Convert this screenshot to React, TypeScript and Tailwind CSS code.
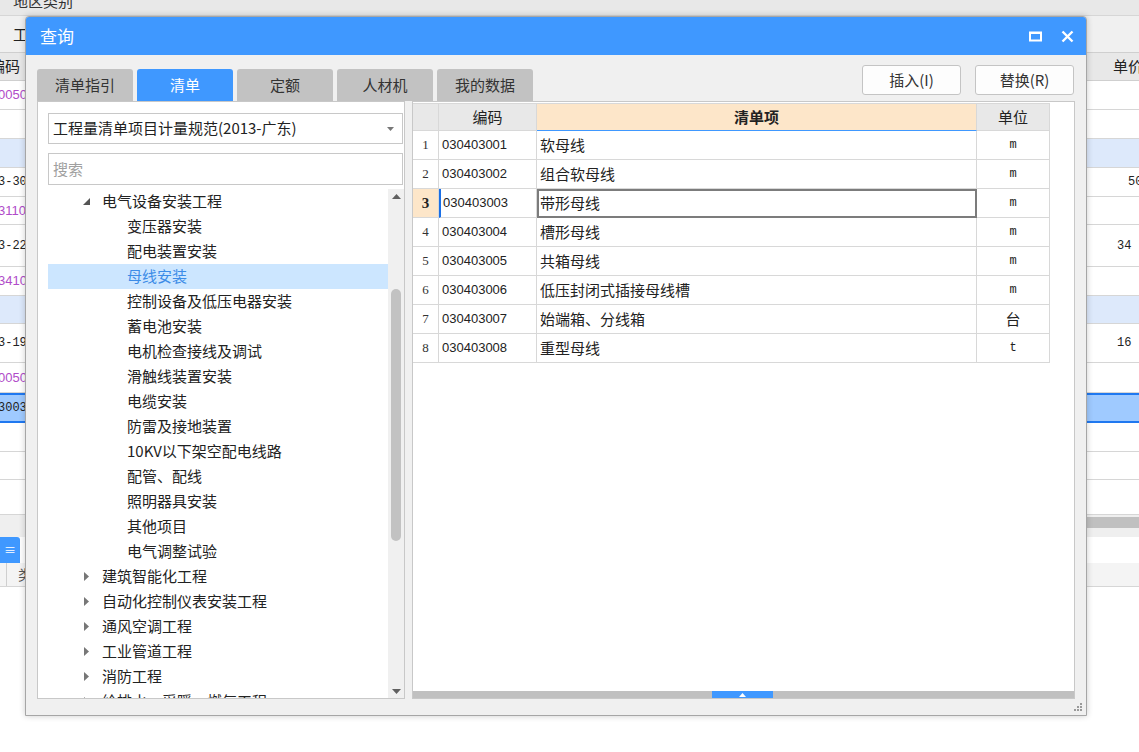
import React from 'react'

const cjk = "font-['Noto_Sans_CJK_SC','Liberation_Sans',sans-serif]"
const purple = "text-[#b04cc9] font-['Liberation_Sans',sans-serif] text-[13px]"

type BgRow = {
  h: string
  bg: string
  left?: string
  leftClass?: string
  right?: string
  rightPad?: string
  selected?: boolean
}

const bgRows: BgRow[] = [
  { h: 'h-[29px]', bg: 'bg-white', left: '0050', leftClass: purple },
  { h: 'h-[29px]', bg: 'bg-white' },
  { h: 'h-[29px]', bg: 'bg-[#dde9fb]' },
  { h: 'h-[29px]', bg: 'bg-white', left: '3-30', right: '50', rightPad: 'pl-[41px]' },
  { h: 'h-[28px]', bg: 'bg-white', left: '3110', leftClass: purple },
  { h: 'h-[42px]', bg: 'bg-white', left: '3-22', right: '34', rightPad: 'pl-[30px]' },
  { h: 'h-[29px]', bg: 'bg-white', left: '3410', leftClass: purple },
  { h: 'h-[28px]', bg: 'bg-[#dde9fb]' },
  { h: 'h-[39px]', bg: 'bg-white', left: '3-19', right: '16', rightPad: 'pl-[30px]' },
  { h: 'h-[30px]', bg: 'bg-white', left: '0050', leftClass: purple },
  { h: 'h-[30px]', bg: 'bg-[#9fcaff]', left: '3003', selected: true },
  { h: 'h-[29px]', bg: 'bg-white' },
  { h: 'h-[28px]', bg: 'bg-white' },
  { h: 'h-[35px]', bg: 'bg-white' },
]

const treeChildren = [
  '变压器安装',
  '配电装置安装',
  '母线安装',
  '控制设备及低压电器安装',
  '蓄电池安装',
  '电机检查接线及调试',
  '滑触线装置安装',
  '电缆安装',
  '防雷及接地装置',
  '10KV以下架空配电线路',
  '配管、配线',
  '照明器具安装',
  '其他项目',
  '电气调整试验',
]

const treeCollapsed = [
  '建筑智能化工程',
  '自动化控制仪表安装工程',
  '通风空调工程',
  '工业管道工程',
  '消防工程',
  '给排水、采暖、燃气工程',
]

const items = [
  { code: '030403001', name: '软母线', unit: 'm' },
  { code: '030403002', name: '组合软母线', unit: 'm' },
  { code: '030403003', name: '带形母线', unit: 'm' },
  { code: '030403004', name: '槽形母线', unit: 'm' },
  { code: '030403005', name: '共箱母线', unit: 'm' },
  { code: '030403006', name: '低压封闭式插接母线槽', unit: 'm' },
  { code: '030403007', name: '始端箱、分线箱', unit: '台' },
  { code: '030403008', name: '重型母线', unit: 't' },
]

const tabs = ['清单指引', '清单', '定额', '人材机', '我的数据']

const Background = () => (
  <div className={`flex flex-col w-[1139px] h-[752px] bg-white overflow-hidden ${cjk}`}>
    <div className="h-[16px] bg-[#e8e8e8] border-b border-[#d6d6d6] overflow-hidden pl-[13px]">
      <div className="-mt-[10px] text-[15px] text-[#333]">地区类别</div>
    </div>
    <div className="h-[36px] bg-[#f0f0f0] flex items-center pl-[13px] text-[15px] text-[#222]">
      工
    </div>
    <div className="h-[29px] flex bg-[#e8e8e8] border-y border-[#cfcfcf] text-[15px] text-[#222]">
      <div className="w-[25px] overflow-hidden flex items-center">
        <span className="-ml-[10px] whitespace-nowrap">编码</span>
      </div>
      <div className="flex-1" />
      <div className="w-[52px] flex items-center pl-[26px] whitespace-nowrap overflow-hidden">单价</div>
    </div>
    {bgRows.map((r, i) => (
      <div
        key={i}
        className={`flex shrink-0 ${r.h} ${r.bg} ${
          r.selected ? 'border-y-2 border-[#1f78f0]' : 'border-b border-[#d6d6d6]'
        }`}
      >
        <div
          className={`w-[25px] overflow-hidden flex items-center whitespace-nowrap ${
            r.leftClass ?? "text-[#222] font-['Liberation_Mono',monospace] text-[12px]"
          }`}
        >
          <span className="-ml-[2px]">{r.left}</span>
        </div>
        <div className="flex-1" />
        <div
          className={`w-[52px] overflow-hidden flex items-center whitespace-nowrap font-['Liberation_Mono',monospace] text-[12px] text-[#222] ${
            r.rightPad ?? ''
          }`}
        >
          {r.right}
        </div>
      </div>
    ))}
    <div className="h-[22px] shrink-0 flex bg-[#efefef]">
      <div className="w-[25px]" />
      <div className="flex-1" />
      <div className="w-[52px] pt-[2px]">
        <div className="h-[11px] bg-[#c0c0c0]" />
      </div>
    </div>
    <div className="h-[26px] shrink-0 flex">
      <div className="w-[20px] bg-[#3f98ff] rounded-tr-[3px] flex items-center justify-center text-white text-[12px]">
        ≡
      </div>
      <div className="flex-1" />
    </div>
    <div className="h-[24px] shrink-0 flex border-b border-[#d6d6d6] bg-[#f4f4f4]">
      <div className="w-[7px] border-r border-[#cfcfcf]" />
      <div className="w-[18px] overflow-hidden flex items-center pl-[11px] text-[14px] text-[#555]">类</div>
      <div className="flex-1" />
    </div>
  </div>
)

const TitleBar = () => (
  <div className="h-[38px] bg-[#3f98ff] rounded-t-[3px] flex items-center justify-between pl-[14px] pr-[12px]">
    <span className="text-white text-[17px]">查询</span>
    <div className="flex items-center gap-[19px]">
      <svg width="13" height="11" viewBox="0 0 13 11">
        <rect x="1" y="1.5" width="11" height="8" fill="none" stroke="white" strokeWidth="2" />
        <rect x="1" y="1" width="11" height="2" fill="white" />
      </svg>
      <svg width="13" height="13" viewBox="0 0 13 13">
        <path d="M1.5 1.5 L11.5 11.5 M11.5 1.5 L1.5 11.5" stroke="white" strokeWidth="2.4" />
      </svg>
    </div>
  </div>
)

const TopSection = () => (
  <div className="h-[46px] flex justify-between pl-[11px] pr-[12px]">
    <div className="flex items-end gap-[4px]">
      {tabs.map((t, i) => (
        <div
          key={t}
          className={`w-[96px] h-[32px] rounded-t-[3px] flex items-center justify-center text-[15px] ${
            i === 1 ? 'bg-[#3f98ff] text-white' : 'bg-[#c2c2c2] text-[#333]'
          }`}
        >
          {t}
        </div>
      ))}
    </div>
    <div className="flex gap-[14px] pt-[10px]">
      <button className="w-[99px] h-[30px] bg-[#fdfdfd] border border-[#c4c4c4] rounded-[3px] text-[15px] text-[#333]">
        插入(I)
      </button>
      <button className="w-[99px] h-[30px] bg-[#fdfdfd] border border-[#c4c4c4] rounded-[3px] text-[15px] text-[#333]">
        替换(R)
      </button>
    </div>
  </div>
)

const TreeRow = ({
  label,
  level,
  arrow,
  selected,
}: {
  label: string
  level: 1 | 2
  arrow?: 'open' | 'closed'
  selected?: boolean
}) => (
  <div
    className={`h-[25px] shrink-0 relative flex items-center text-[15px] whitespace-nowrap ${
      selected ? 'bg-[#cce6ff] text-[#3c8ce7]' : 'text-[#222]'
    } ${level === 1 ? 'pl-[54px]' : 'pl-[79px]'}`}
  >
    {arrow === 'open' && (
      <svg className="absolute left-[35px] top-[9px]" width="7" height="7" viewBox="0 0 7 7">
        <path d="M7 0 L7 7 L0 7 Z" fill="#555" />
      </svg>
    )}
    {arrow === 'closed' && (
      <svg className="absolute left-[36px] top-[8px]" width="5" height="9" viewBox="0 0 5 9">
        <path d="M0 0 L5 4.5 L0 9 Z" fill="#777" />
      </svg>
    )}
    {label}
  </div>
)

const LeftPanel = () => (
  <div className="w-[368px] h-full bg-white border border-[#c8c8c8] flex flex-col">
    <div className="mt-[11px] ml-[10px] mr-[1px] h-[31px] border border-[#c8c8c8] flex items-center justify-between pl-[4px] pr-[8px] text-[15px] text-[#222]">
      <span>工程量清单项目计量规范(2013-广东)</span>
      <svg width="7" height="4" viewBox="0 0 7 4">
        <path d="M0 0 L7 0 L3.5 4 Z" fill="#777" />
      </svg>
    </div>
    <div className="mt-[9px] ml-[10px] mr-[1px] h-[32px] border border-[#c8c8c8] flex items-center pl-[4px] text-[15px] text-[#a0a0a0]">
      搜索
    </div>
    <div className="mt-[4px] ml-[10px] flex-1 flex min-h-0">
      <div className="flex-1 flex flex-col overflow-hidden">
        <TreeRow label="电气设备安装工程" level={1} arrow="open" />
        {treeChildren.map((c) => (
          <TreeRow key={c} label={c} level={2} selected={c === '母线安装'} />
        ))}
        {treeCollapsed.map((c) => (
          <TreeRow key={c} label={c} level={1} arrow="closed" />
        ))}
      </div>
      <div className="w-[16px] bg-[#f0f0f0] flex flex-col items-center">
        <svg className="mt-[5px]" width="9" height="5" viewBox="0 0 9 5">
          <path d="M0 5 L4.5 0 L9 5 Z" fill="#606060" />
        </svg>
        <div className="mt-[90px] w-[10px] h-[252px] rounded-full bg-[#c2c2c2]" />
        <div className="flex-1" />
        <svg className="mb-[4px]" width="9" height="5" viewBox="0 0 9 5">
          <path d="M0 0 L9 0 L4.5 5 Z" fill="#606060" />
        </svg>
      </div>
    </div>
  </div>
)

const cell = 'border-r border-b border-[#d8d8d8] flex items-center'

const RightPanel = () => (
  <div className="w-[663px] h-full bg-white border border-[#c8c8c8] flex flex-col">
    <div className="mt-[1px] grid grid-cols-[26px_98px_440px_73px] w-[637px]">
      <div className={`${cell} h-[28px] bg-[#e8e8e8] border-t`} />
      <div className={`${cell} h-[28px] bg-[#e8e8e8] border-t justify-center text-[15px] text-[#222]`}>编码</div>
      <div className="border-r border-t border-[#d8d8d8] border-b-[#3f98ff] border-b h-[28px] bg-[#fde6c9] flex items-center justify-center text-[15px] font-bold text-[#222]">
        清单项
      </div>
      <div className={`${cell} h-[28px] bg-[#e8e8e8] border-t justify-center text-[15px] text-[#222]`}>单位</div>
      {items.map((it, i) => {
        const cur = i === 2
        return (
          <React.Fragment key={it.code}>
            <div
              className={`${cell} h-[29px] justify-center font-['Liberation_Serif',serif] ${
                cur ? 'bg-[#fde6c9] font-bold text-[15px] text-[#222]' : 'text-[13px] text-[#333]'
              }`}
            >
              {i + 1}
            </div>
            <div
              className={`${cell} h-[29px] font-['Liberation_Sans',sans-serif] text-[13px] text-[#222] ${
                cur ? 'border-l-2 border-l-[#1a6fe6] pl-[2px]' : 'pl-[3px]'
              }`}
            >
              {it.code}
            </div>
            <div
              className={`h-[29px] flex items-center text-[15px] text-[#222] ${
                cur ? 'border-2 border-[#7c7c7c] pl-[1px]' : 'border-r border-b border-[#d8d8d8] pl-[3px]'
              }`}
            >
              {it.name}
            </div>
            <div
              className={`${cell} h-[29px] justify-center text-[#222] ${
                it.unit === '台' ? 'text-[15px]' : "font-['Liberation_Mono',monospace] text-[12px]"
              }`}
            >
              {it.unit}
            </div>
          </React.Fragment>
        )
      })}
    </div>
    <div className="flex-1" />
    <div className="h-[7px] bg-[#c0c0c0] relative">
      <div className="absolute left-[299px] top-0 w-[61px] h-[7px] bg-[#3f98ff] flex items-center justify-center">
        <svg width="7" height="4" viewBox="0 0 7 4">
          <path d="M0 4 L3.5 0 L7 4 Z" fill="white" />
        </svg>
      </div>
    </div>
  </div>
)

const Grip = () => (
  <svg className="absolute right-[3px] bottom-[3px]" width="9" height="9" viewBox="0 0 9 9">
    <rect x="6" y="0" width="2" height="2" fill="#9a9a9a" />
    <rect x="3" y="3" width="2" height="2" fill="#9a9a9a" />
    <rect x="6" y="3" width="2" height="2" fill="#9a9a9a" />
    <rect x="0" y="6" width="2" height="2" fill="#9a9a9a" />
    <rect x="3" y="6" width="2" height="2" fill="#9a9a9a" />
    <rect x="6" y="6" width="2" height="2" fill="#9a9a9a" />
  </svg>
)

const QueryDialog = () => (
  <div
    className={`absolute left-[25px] top-[16px] w-[1062px] h-[700px] bg-[#f0f0f0] border border-[#a6a6a6] rounded-t-[4px] shadow-[0_0_6px_rgba(0,0,0,0.2)] flex flex-col ${cjk}`}
  >
    <TitleBar />
    <TopSection />
    <div className="h-[598px] flex pl-[11px] gap-[7px]">
      <LeftPanel />
      <RightPanel />
    </div>
    <Grip />
  </div>
)

export default function App() {
  return (
    <div className="relative w-[1139px] h-[752px] overflow-hidden">
      <Background />
      <QueryDialog />
    </div>
  )
}
